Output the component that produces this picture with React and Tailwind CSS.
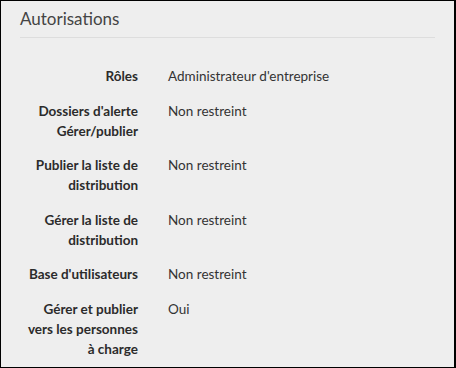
import React from 'react';

const rows = [
  { label: ['Rôles'], value: "Administrateur d'entreprise" },
  { label: ["Dossiers d'alerte", 'Gérer/publier'], value: 'Non restreint' },
  { label: ['Publier la liste de', 'distribution'], value: 'Non restreint' },
  { label: ['Gérer la liste de', 'distribution'], value: 'Non restreint' },
  { label: ["Base d'utilisateurs"], value: 'Non restreint' },
  { label: ['Gérer et publier', 'vers les personnes', 'à charge'], value: 'Oui' },
];

const App = () => {
  return (
    <div className="w-[456px] h-[368px] bg-[#eeeeee] border border-r-2 border-black font-['Lato',sans-serif] text-[#333333] overflow-hidden">
      <div className="px-[19px]">
        <h2 className="pt-[8px] pb-[8px] text-[17px] leading-[20px] text-[#444444] border-b border-[#dddddd]">
          Autorisations
        </h2>
        <div className="pt-[28px] flex flex-col gap-[14.5px] text-[13.5px] leading-[20px]">
          {rows.map((row, i) => (
            <div key={i} className="flex">
              <div className="w-[118px] text-right font-bold text-[#2b2b2b]">
                {row.label.map((line, j) => (
                  <div key={j}>{line}</div>
                ))}
              </div>
              <div className="pl-[30px]">{row.value}</div>
            </div>
          ))}
        </div>
      </div>
    </div>
  );
};

export default App;
